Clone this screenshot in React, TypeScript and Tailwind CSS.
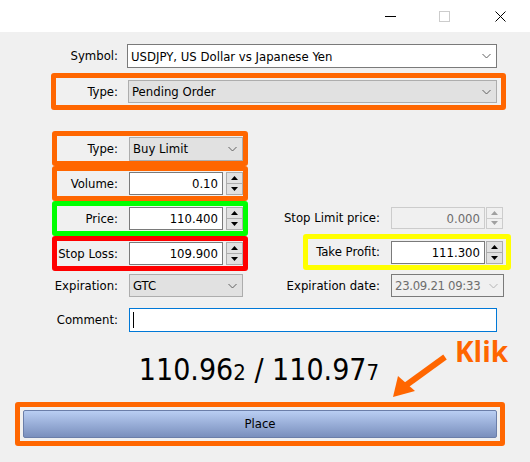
import React from 'react';

const ui = "font-['DejaVu_Sans_Condensed','Liberation_Sans',sans-serif]";

function Chevron({ muted }: { muted?: boolean }) {
  return (
    <svg width="9" height="6" viewBox="0 0 9 6" className="shrink-0">
      <path d="M0.5 1 L4.5 5 L8.5 1" fill="none" stroke={muted ? '#b4b4b4' : '#606060'} strokeWidth="1" />
    </svg>
  );
}

function Combo({
  value,
  variant = 'gray',
  className = '',
}: {
  value: string;
  variant?: 'white' | 'gray' | 'disabled';
  className?: string;
}) {
  const look =
    variant === 'white'
      ? 'bg-white border-[#7a7a7a] text-black'
      : variant === 'gray'
        ? 'bg-[#e1e1e1] border-[#adadad] text-black'
        : 'bg-[#f0f0f0] border-[#7a7a7a] text-[#6d6d6d] tracking-[-0.3px]';
  return (
    <div className={`flex items-center justify-between border pl-[3px] pr-[5px] ${look} ${className}`}>
      <span className="whitespace-nowrap leading-none">{value}</span>
      <Chevron muted={variant === 'disabled'} />
    </div>
  );
}

function Edit({ value, disabled, className = '' }: { value: string; disabled?: boolean; className?: string }) {
  return (
    <div
      className={`flex items-center justify-end border pr-[4px] leading-none ${
        disabled ? 'bg-[#f0f0f0] border-[#cccccc] text-[#6d6d6d]' : 'bg-white border-[#7a7a7a] text-black'
      } ${className}`}
    >
      {value}
    </div>
  );
}

function Spin({ disabled, className = '' }: { disabled?: boolean; className?: string }) {
  const fill = disabled ? '#a0a0a0' : '#000000';
  const btn = disabled ? 'bg-[#f0f0f0] border-[#cccccc]' : 'bg-[#e1e1e1] border-[#adadad]';
  return (
    <div className={`flex flex-col w-[17px] ${className}`}>
      <div className={`flex-1 border flex items-center justify-center ${btn}`}>
        <svg width="7" height="4" viewBox="0 0 7 4">
          <path d="M0 4 L3.5 0 L7 4 Z" fill={fill} />
        </svg>
      </div>
      <div className={`flex-1 border border-t-0 flex items-center justify-center ${btn}`}>
        <svg width="7" height="4" viewBox="0 0 7 4">
          <path d="M0 0 L7 0 L3.5 4 Z" fill={fill} />
        </svg>
      </div>
    </div>
  );
}

function Box({ color, children }: { color: string; children: React.ReactNode }) {
  return <div className={`h-[35px] border-[5px] rounded-[3px] flex items-center ${color}`}>{children}</div>;
}

export default function App() {
  return (
    <div className={`relative w-[530px] h-[462px] overflow-hidden bg-[#f0f0f0] text-[13px] text-black ${ui}`}>
      {/* title bar */}
      <div className="h-[32px] bg-white flex items-center justify-end">
        <svg width="11" height="11" viewBox="0 0 11 11" className="mr-[43px]">
          <path d="M0 5.5 H11" stroke="#000" strokeWidth="1" />
        </svg>
        <svg width="11" height="11" viewBox="0 0 11 11" className="mr-[45px]">
          <rect x="0.5" y="0.5" width="10" height="10" fill="none" stroke="#cccccc" strokeWidth="1" />
        </svg>
        <svg width="11" height="11" viewBox="0 0 11 11" className="mr-[24px]">
          <path d="M0.5 0.5 L10.5 10.5 M10.5 0.5 L0.5 10.5" stroke="#000" strokeWidth="1" />
        </svg>
      </div>

      {/* symbol */}
      <div className="mt-[12px] flex items-center h-[24px]">
        <div className="w-[118px] text-right">Symbol:</div>
        <Combo value="USDJPY, US Dollar vs Japanese Yen" variant="white" className="ml-[9px] w-[370px] h-[24px]" />
      </div>

      {/* order type */}
      <div className="mt-[5px] ml-[51px] w-[455px] h-[37px] border-[5px] border-[#ff6600] rounded-[3px] flex items-center pr-[4px]">
        <div className="w-[62px] text-right">Type:</div>
        <Combo value="Pending Order" className="ml-[10px] flex-1 h-[23px]" />
      </div>

      {/* order params */}
      <div className="mt-[21px] flex">
        <div className="ml-[52px] w-[196px] flex flex-col">
          <Box color="border-[#ff6600]">
            <div className="w-[61px] text-right">Type:</div>
            <Combo value="Buy Limit" className="ml-[11px] w-[114px] h-[24px]" />
          </Box>
          <Box color="border-[#ff6600]">
            <div className="w-[61px] text-right">Volume:</div>
            <Edit value="0.10" className="ml-[11px] w-[94px] h-[23px]" />
            <Spin className="ml-[3px] h-[23px]" />
          </Box>
          <Box color="border-[#00ff00]">
            <div className="w-[61px] text-right">Price:</div>
            <Edit value="110.400" className="ml-[11px] w-[94px] h-[23px]" />
            <Spin className="ml-[3px] h-[23px]" />
          </Box>
          <Box color="border-[#ff0000]">
            <div className="w-[61px] text-right whitespace-nowrap">Stop Loss:</div>
            <Edit value="109.900" className="ml-[11px] w-[94px] h-[23px]" />
            <Spin className="ml-[3px] h-[23px]" />
          </Box>
          <div className="mt-[3px] flex items-center h-[23px]">
            <div className="w-[66px] text-right">Expiration:</div>
            <Combo value="GTC" className="ml-[11px] w-[114px] h-[23px]" />
          </div>
        </div>

        <div className="ml-[22px] w-[241px] flex flex-col">
          <div className="mt-[76px] flex items-center h-[22px]">
            <div className="w-[110px] text-right whitespace-nowrap">Stop Limit price:</div>
            <Edit value="0.000" disabled className="ml-[11px] w-[94px] h-[22px]" />
            <Spin disabled className="ml-[1px] h-[22px]" />
          </div>
          <div className="mt-[5px] ml-[33px] w-[208px] h-[36px] border-[5px] border-[#ffff00] rounded-[3px] flex items-center">
            <div className="w-[72px] text-right whitespace-nowrap">Take Profit:</div>
            <Edit value="111.300" className="ml-[11px] w-[94px] h-[23px]" />
            <Spin className="ml-[1px] h-[23px]" />
          </div>
          <div className="mt-[4px] flex items-center h-[23px]">
            <div className="w-[110px] text-right whitespace-nowrap">Expiration date:</div>
            <Combo value="23.09.21 09:33" variant="disabled" className="ml-[11px] w-[113px] h-[23px]" />
          </div>
        </div>
      </div>

      {/* comment */}
      <div className="mt-[11px] flex items-center h-[24px]">
        <div className="w-[118px] text-right">Comment:</div>
        <div className="ml-[11px] w-[368px] h-[24px] bg-white border border-[#0078d7] flex items-center pl-[3px]">
          <span className="w-px h-[16px] bg-black" />
        </div>
      </div>

      {/* bid / ask */}
      <div className="h-[70px] flex items-center justify-center pt-[6px] pr-[12px]">
        <span className="text-[30px] leading-none whitespace-nowrap">
          110.96<span className="text-[22px]">2</span> / 110.97<span className="text-[22px]">7</span>
        </span>
      </div>

      {/* place */}
      <div className="ml-[15px] w-[490px] h-[44px] border-[5px] border-[#ff6600] rounded-[3px] p-[3px]">
        <button className="w-full h-full rounded-[2px] border border-[#6b7ea9] bg-gradient-to-b from-[#b9cef3] to-[#7a8fbd] text-[13px] text-black">
          Place
        </button>
      </div>

      {/* annotation */}
      <div className="absolute left-[455px] top-[337px] text-[28px] font-bold leading-none text-[#ff6600] font-['Open_Sans','Liberation_Sans',sans-serif]">
        Klik
      </div>
      <svg className="absolute left-[385px] top-[350px]" width="70" height="55" viewBox="0 0 70 55">
        <path d="M60 7 L20 36" stroke="#ff6600" strokeWidth="6" strokeLinecap="butt" />
        <path d="M8 47 L13 26 L30 41 Z" fill="#ff6600" />
      </svg>
    </div>
  );
}
